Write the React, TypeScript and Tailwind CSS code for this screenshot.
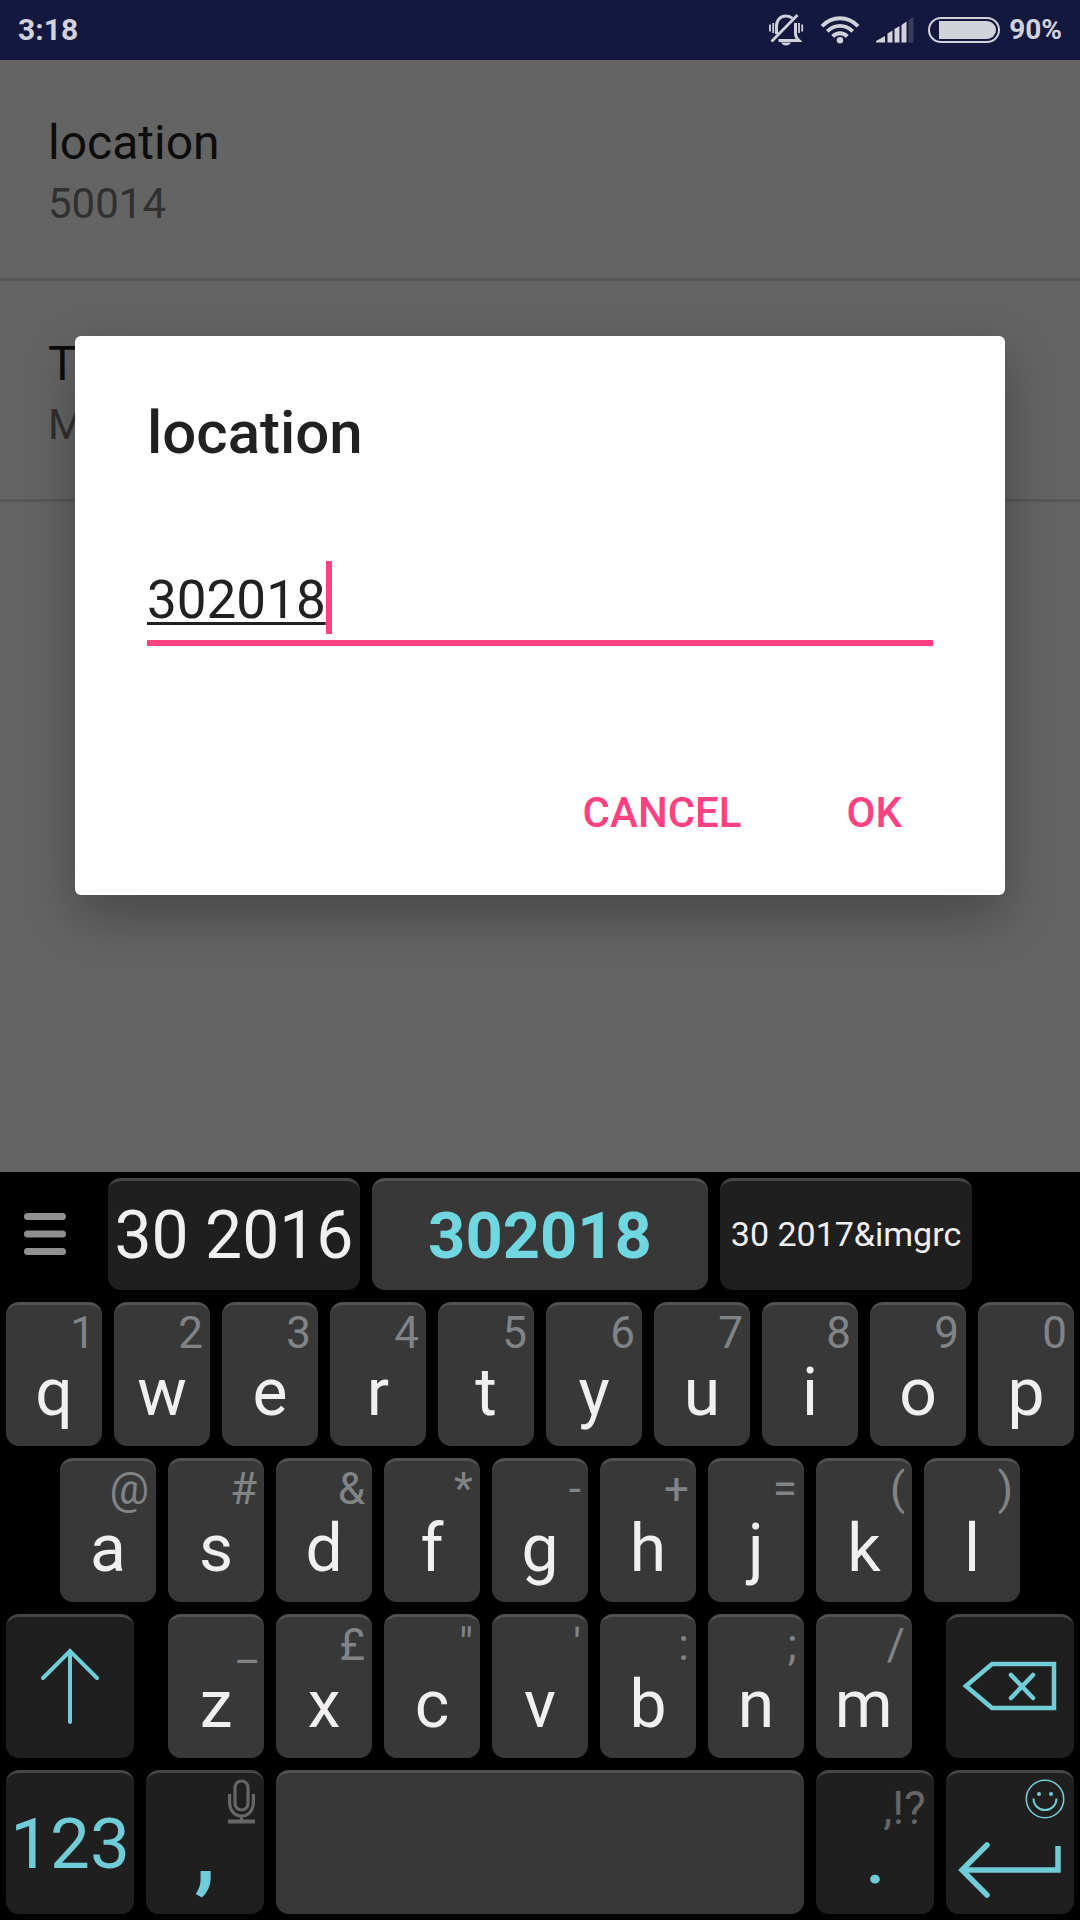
import { useState, type ReactNode } from "react";

type KeyDef = { label: string; hint: string };

const TOP_ROW: KeyDef[] = [
  { label: "q", hint: "1" },
  { label: "w", hint: "2" },
  { label: "e", hint: "3" },
  { label: "r", hint: "4" },
  { label: "t", hint: "5" },
  { label: "y", hint: "6" },
  { label: "u", hint: "7" },
  { label: "i", hint: "8" },
  { label: "o", hint: "9" },
  { label: "p", hint: "0" },
];

const HOME_ROW: KeyDef[] = [
  { label: "a", hint: "@" },
  { label: "s", hint: "#" },
  { label: "d", hint: "&" },
  { label: "f", hint: "*" },
  { label: "g", hint: "-" },
  { label: "h", hint: "+" },
  { label: "j", hint: "=" },
  { label: "k", hint: "(" },
  { label: "l", hint: ")" },
];

const BOTTOM_ROW: KeyDef[] = [
  { label: "z", hint: "_" },
  { label: "x", hint: "£" },
  { label: "c", hint: '"' },
  { label: "v", hint: "'" },
  { label: "b", hint: ":" },
  { label: "n", hint: ";" },
  { label: "m", hint: "/" },
];

function MutedBellIcon() {
  return (
    <svg width="36" height="32" viewBox="0 0 36 32" fill="none" stroke="currentColor" aria-hidden="true">
      <path d="M29.500 1 3.500 27.500" strokeWidth="2.8" />
      <path d="M8.500 20V12C8.500 6 12.500 2 18 2c2.600 0 4.700.8 6.300 2.200" strokeWidth="3" />
      <path d="M27.500 9v11c0 3 1.500 4.500 3.500 6.500H10.500" strokeWidth="3" />
      <path d="M2 10.500v7M5.200 9v10M31 9v10M34.200 10.500v7" strokeWidth="1.800" />
      <path d="M13 28.500h10c-1 2-2.800 3-5 3s-4-1-5-3z" fill="currentColor" stroke="none" />
    </svg>
  );
}

function WifiIcon() {
  return (
    <svg width="40" height="28" viewBox="0 0 40 28" fill="none" stroke="currentColor" strokeWidth="3.800" aria-hidden="true">
      <path d="M2 10.200C12-.4 28-.4 38 10.200" />
      <path d="M7.300 15.400c7.200-7.400 18.200-7.400 25.400 0" />
      <path d="M12.600 20.400c4.400-4.200 10.400-4.200 14.800 0" />
      <circle cx="20" cy="24.300" r="3.200" fill="currentColor" stroke="none" />
    </svg>
  );
}

function SignalIcon() {
  return (
    <svg width="38" height="26" viewBox="0 0 38 26" fill="currentColor" aria-hidden="true">
      <path d="M0 25.500V24l9-5v6.500zM11.500 25.500V16.500l5-3v12zM18.500 25.500V12l5-3v16.500zM25.500 25.500V8l5-3.500v21z" />
      <path d="M32.500 25.500V3l4-2.500h1v25z" opacity="0.2" />
    </svg>
  );
}

function BatteryIcon() {
  return (
    <svg width="72" height="26" viewBox="0 0 72 26" aria-hidden="true">
      <rect x="1" y="1" width="70" height="24" rx="12" fill="none" stroke="currentColor" strokeWidth="2" />
      <path d="M11 4h48a9 9 0 0 1 0 18H11z" fill="currentColor" />
    </svg>
  );
}

function ShiftIcon() {
  return (
    <svg width="60" height="76" viewBox="0 0 60 76" fill="none" stroke="currentColor" strokeWidth="4" strokeLinecap="round" aria-hidden="true">
      <path d="M30 74V3M3 30 30 3l27 27" />
    </svg>
  );
}

function BackspaceIcon() {
  return (
    <svg width="94" height="50" viewBox="0 0 94 50" fill="none" stroke="currentColor" strokeWidth="4.500" aria-hidden="true">
      <path d="M29 3h62v44H29L3 25z" />
      <path d="M48 14l22 23M70 14 48 37" strokeLinecap="round" />
    </svg>
  );
}

function MicIcon() {
  return (
    <svg width="27" height="45" viewBox="0 0 27 45" fill="none" stroke="currentColor" strokeWidth="3.200" aria-hidden="true">
      <rect x="7" y="2" width="13" height="29" rx="6.500" />
      <path d="M1.600 15v8c0 8 4.500 14 11.900 14s11.900-6 11.900-14v-8M13.500 37v5" />
      <path d="M0 42.500h27" strokeWidth="4" />
    </svg>
  );
}

function SmileyIcon() {
  return (
    <svg width="40" height="40" viewBox="0 0 40 40" fill="none" stroke="currentColor" strokeWidth="1.600" aria-hidden="true">
      <circle cx="20" cy="20" r="18.700" />
      <path d="M8.500 19.500c0 6.500 5 11.500 11.500 11.500s11.500-5 11.500-11.500" strokeWidth="2" />
      <circle cx="14" cy="15" r="2" fill="currentColor" stroke="none" />
      <circle cx="26" cy="15" r="2" fill="currentColor" stroke="none" />
    </svg>
  );
}

function EnterIcon() {
  return (
    <svg width="104" height="58" viewBox="0 0 104 58" fill="none" stroke="currentColor" strokeWidth="5.500" aria-hidden="true">
      <path d="M4 29h96V5" />
      <path d="M29 4 4 29l25 25" strokeLinecap="round" />
    </svg>
  );
}

function LetterKey({ label, hint }: KeyDef) {
  return (
    <button
      type="button"
      className="flex h-36 min-w-0 flex-col rounded-[13px] border-t-[3px] border-[#525252] bg-[#383838] pt-1"
    >
      <span className="w-full pr-[7px] text-right text-[44px] leading-[48px] text-[#808487]">{hint}</span>
      <span className="w-full text-center text-[66px] leading-[72px] text-[#f1eff0]">{label}</span>
    </button>
  );
}

function DarkKey({ label, className, children }: { label: string; className: string; children: ReactNode }) {
  return (
    <button
      type="button"
      aria-label={label}
      className={`flex h-36 shrink-0 flex-col items-center rounded-[13px] border-t-[3px] border-[#464646] bg-[#1f1f1f] text-[#70ccd6] ${className}`}
    >
      {children}
    </button>
  );
}

function Preference({ title, value }: { title: string; value: string }) {
  return (
    <div className="border-b-[3px] border-[#575757] px-12 pt-[53px] pb-[43px]">
      <div className="text-[48px] leading-[60px] text-[#0c0c0c]">{title}</div>
      <div className="text-[42px] leading-[62px] text-[#303030]">{value}</div>
    </div>
  );
}

function Keyboard() {
  return (
    <section aria-label="Keyboard" className="flex flex-col gap-3 bg-black py-[6px]">
      <div className="flex h-28 gap-3">
        <button type="button" aria-label="Menu" className="flex w-24 shrink-0 items-center justify-center text-[#909090]">
          <svg width="54" height="44" viewBox="0 0 54 44" stroke="currentColor" strokeWidth="7" strokeLinecap="round" aria-hidden="true">
            <path d="M6.500 4.500h35M6.500 22h35M6.500 39.500h35" />
          </svg>
        </button>
        <button type="button" className="min-w-0 flex-[3] rounded-[13px] border-t-[3px] border-[#464646] bg-[#1f1f1f] text-[66px] leading-[72px] whitespace-nowrap text-[#f1eff0]">
          30 2016
        </button>
        <button type="button" className="min-w-0 flex-[4] rounded-[13px] border-t-[3px] border-[#525252] bg-[#383838] text-[65px] leading-[72px] font-bold text-[#70d7e0]">
          302018
        </button>
        <button type="button" className="min-w-0 flex-[3] rounded-[13px] border-t-[3px] border-[#464646] bg-[#1f1f1f] pb-1 text-[34px] leading-[48px] whitespace-nowrap text-[#f1eff0]">
          30 2017&amp;imgrc
        </button>
        <div className="w-24 shrink-0" />
      </div>

      <div className="grid grid-cols-10 gap-3 px-[6px]">
        {TOP_ROW.map((k) => (
          <LetterKey key={k.label} {...k} />
        ))}
      </div>

      <div className="grid grid-cols-9 gap-3 px-[60px]">
        {HOME_ROW.map((k) => (
          <LetterKey key={k.label} {...k} />
        ))}
      </div>

      <div className="flex justify-between px-[6px]">
        <DarkKey label="Shift" className="w-[12%] justify-center pb-[3px]">
          <ShiftIcon />
        </DarkKey>
        <div className="grid w-[calc(70%-4px)] grid-cols-7 gap-3">
          {BOTTOM_ROW.map((k) => (
            <LetterKey key={k.label} {...k} />
          ))}
        </div>
        <DarkKey label="Backspace" className="w-[12%] justify-center pb-[3px]">
          <BackspaceIcon />
        </DarkKey>
      </div>

      <div className="flex gap-3 px-[6px]">
        <DarkKey label="123" className="w-[12%] justify-center text-[71px] leading-[84px]">
          <span>123</span>
        </DarkKey>
        <DarkKey label="Comma" className="w-[11%]">
          <span className="flex h-[51px] w-full justify-end pt-[6px] pr-[9px] text-[#666666]">
            <MicIcon />
          </span>
          <span className="text-[96px] leading-[50px] font-medium">,</span>
        </DarkKey>
        <button
          type="button"
          aria-label="Space"
          className="h-36 flex-1 rounded-[13px] border-t-[3px] border-[#525252] bg-[#383838]"
        />
        <DarkKey label="Period" className="w-[11%]">
          <span className="h-[51px] w-full pr-2 text-right text-[46px] leading-[70px] text-[#666666]">,!?</span>
          <span className="text-[60px] leading-[78px] font-bold">.</span>
        </DarkKey>
        <DarkKey label="Enter" className="w-[12%]">
          <span className="flex h-[51px] w-full justify-end pt-[6px] pr-[9px]">
            <SmileyIcon />
          </span>
          <span className="pt-[17px]">
            <EnterIcon />
          </span>
        </DarkKey>
      </div>
    </section>
  );
}

export default function App() {
  const [value, setValue] = useState("302018");

  return (
    <div className="flex min-h-screen flex-col bg-[#646464] font-['Roboto',sans-serif]">
      <header className="flex h-[60px] items-center justify-between bg-[#14183f] px-[18px] text-[30px] leading-[36px] font-bold text-[#d1d2da]">
        <span>3:18</span>
        <div className="flex items-center">
          <MutedBellIcon />
          <span className="ml-4">
            <WifiIcon />
          </span>
          <span className="ml-4">
            <SignalIcon />
          </span>
          <span className="mr-[9px] ml-[14px]">
            <BatteryIcon />
          </span>
          <span className="text-[28px]">90%</span>
        </div>
      </header>

      <main className="relative flex-1">
        <Preference title="location" value="50014" />
        <Preference title="T" value="M" />

        <div className="absolute inset-0 flex items-center justify-center px-[75px] pb-px">
          <div
            role="dialog"
            aria-labelledby="dialog-title"
            className="w-full rounded-[6px] bg-white pt-[61px] pb-7 shadow-[0_20px_54px_rgba(0,0,0,0.3)]"
          >
            <h1 id="dialog-title" className="px-[72px] text-[60px] leading-[72px] font-medium text-[#212121]">
              location
            </h1>
            <div className="mx-[72px] mt-[92px] flex h-[85px] border-b-[6px] border-[#ff4081]">
              <input
                type="text"
                aria-labelledby="dialog-title"
                value={value}
                onChange={(e) => setValue(e.target.value)}
                className="field-sizing-content h-[79px] text-[53px] leading-[79px] text-[#212121] underline decoration-[#212121] decoration-[3px] underline-offset-[4px] caret-transparent outline-none"
              />
              <span className="h-[73px] w-[6px] bg-[#ff4081]" />
            </div>
            <div className="mt-[113px] flex justify-end gap-[9px] pr-[55px] text-[42px] leading-[48px] font-medium text-[#ff4081]">
              <button type="button" className="h-[108px] px-12">
                CANCEL
              </button>
              <button type="button" className="h-[108px] px-12">
                OK
              </button>
            </div>
          </div>
        </div>
      </main>

      <Keyboard />
    </div>
  );
}
